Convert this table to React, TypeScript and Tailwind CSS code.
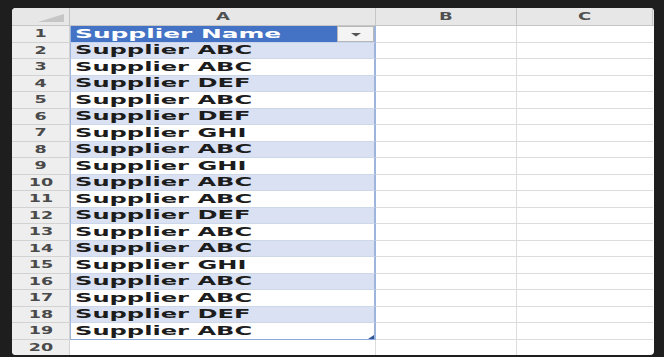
const rows = [
  'Supplier ABC',
  'Supplier ABC',
  'Supplier DEF',
  'Supplier ABC',
  'Supplier DEF',
  'Supplier GHI',
  'Supplier ABC',
  'Supplier GHI',
  'Supplier ABC',
  'Supplier ABC',
  'Supplier DEF',
  'Supplier ABC',
  'Supplier ABC',
  'Supplier GHI',
  'Supplier ABC',
  'Supplier ABC',
  'Supplier DEF',
  'Supplier ABC',
]

const font = { fontFamily: '"DejaVu Sans", "Liberation Sans", sans-serif' }

function RowNum({ n }: { n: number }) {
  return (
    <div className="flex w-[58px] shrink-0 items-center justify-center border-r border-b border-[#d2d2d2] bg-[#eeeeee]">
      <span className="inline-block origin-center scale-x-[1.75] text-[10px] leading-none font-bold text-[#4a4a4a]">
        {n}
      </span>
    </div>
  )
}

function EmptyCells() {
  return (
    <>
      <div className="w-[141px] shrink-0 border-r border-b border-[#dcdcdc]" />
      <div className="w-[136px] shrink-0 border-b border-[#dcdcdc]" />
    </>
  )
}

export default function App() {
  return (
    <div className="h-[357px] w-[664px] overflow-hidden bg-[#1e1e1e] pt-[8px] pl-[12px]" style={font}>
      <div className="h-[347px] w-[642px] overflow-hidden rounded-[4px] bg-white">
        {/* column headers */}
        <div className="flex h-[18px] border-b border-[#c6c6c6] bg-[#e7e7e7]">
          <div className="relative w-[58px] shrink-0 border-r border-[#c2c2c2]">
            <svg className="absolute top-0 left-0" width="58" height="18" viewBox="0 0 58 18">
              <polygon points="26,14 52,14 52,6" fill="#c6c6c6" />
            </svg>
          </div>
          {[
            { l: 'A', w: 'w-[306px]' },
            { l: 'B', w: 'w-[141px]' },
            { l: 'C', w: 'w-[136px]' },
          ].map((c) => (
            <div
              key={c.l}
              className={`flex shrink-0 items-center justify-center border-r border-[#c6c6c6] ${c.w}`}
            >
              <span className="inline-block origin-center scale-x-[1.8] text-[10px] leading-none font-bold text-[#505050]">
                {c.l}
              </span>
            </div>
          ))}
        </div>

        {/* row 1: table header */}
        <div className="flex h-[17px]">
          <RowNum n={1} />
          <div className="flex w-[306px] shrink-0 border-r-2 border-b border-l border-[#9db4dd] border-b-[#c9d5ec] bg-[#4472c4]">
            <div className="flex flex-1 items-center pl-[4px] pt-px">
              <span className="inline-block origin-left scale-x-[2.16] text-[11.5px] leading-none font-bold text-white">
                Supplier Name
              </span>
            </div>
            <div className="flex h-[16px] w-[37px] items-center justify-center border border-[#b8b8b8] bg-[#f4f4f4]">
              <svg width="12" height="5" viewBox="0 0 12 5">
                <polygon points="1,1 11,1 6,4.5" fill="#555555" />
              </svg>
            </div>
          </div>
          <EmptyCells />
        </div>

        {/* rows 2-19 */}
        {rows.map((name, i) => {
          const n = i + 2
          const last = n === 19
          return (
            <div key={n} className={`flex ${n % 2 === 0 ? 'h-[16px]' : 'h-[17px]'}`}>
              <RowNum n={n} />
              <div
                className={`relative flex w-[306px] shrink-0 items-center border-r-2 border-b border-l border-r-[#9db4dd] border-l-[#9db4dd] pl-[4px] pt-px ${
                  last ? 'border-b-[#8eaadb]' : 'border-b-[#cdd7ea]'
                } ${n % 2 === 0 ? 'bg-[#d9e1f2]' : 'bg-white'}`}
              >
                <span className="inline-block origin-left scale-x-[2.1] text-[11.5px] leading-none font-bold text-[#1c1c1c]">
                  {name}
                </span>
                {last && (
                  <svg className="absolute right-0 bottom-0" width="6" height="4" viewBox="0 0 6 4">
                    <polygon points="0,4 6,4 6,0" fill="#2f5597" />
                  </svg>
                )}
              </div>
              <EmptyCells />
            </div>
          )
        })}

        {/* row 20 */}
        <div className="flex h-[17px]">
          <RowNum n={20} />
          <div className="w-[306px] shrink-0 border-r border-b border-[#dcdcdc]" />
          <EmptyCells />
        </div>
      </div>
    </div>
  )
}
